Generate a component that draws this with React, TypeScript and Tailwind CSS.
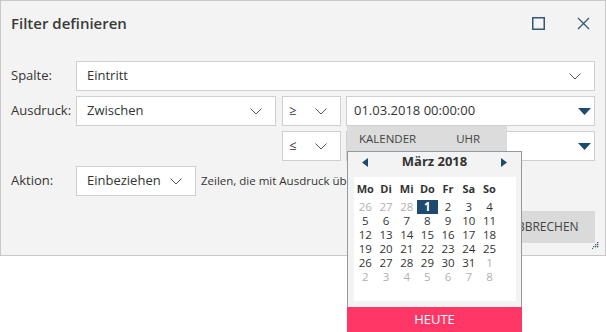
const font = { fontFamily: '"Open Sans", "Noto Sans", sans-serif' };

function Chevron() {
  return (
    <svg width="12" height="7" viewBox="0 0 12 7" className="shrink-0">
      <polyline points="0.5,0.5 6,6 11.5,0.5" fill="none" stroke="#555" strokeWidth="1" />
    </svg>
  );
}

function Caret() {
  return (
    <svg width="13" height="7" viewBox="0 0 13 7" className="shrink-0">
      <polygon points="0,0 13,0 6.5,7" fill="#1d4a6e" />
    </svg>
  );
}

const days: { d: number; muted?: boolean }[][] = [
  [{ d: 26, muted: true }, { d: 27, muted: true }, { d: 28, muted: true }, { d: 1 }, { d: 2 }, { d: 3 }, { d: 4 }],
  [{ d: 5 }, { d: 6 }, { d: 7 }, { d: 8 }, { d: 9 }, { d: 10 }, { d: 11 }],
  [{ d: 12 }, { d: 13 }, { d: 14 }, { d: 15 }, { d: 16 }, { d: 17 }, { d: 18 }],
  [{ d: 19 }, { d: 20 }, { d: 21 }, { d: 22 }, { d: 23 }, { d: 24 }, { d: 25 }],
  [{ d: 26 }, { d: 27 }, { d: 28 }, { d: 29 }, { d: 30 }, { d: 31 }, { d: 1, muted: true }],
  [{ d: 2, muted: true }, { d: 3, muted: true }, { d: 4, muted: true }, { d: 5, muted: true }, { d: 6, muted: true }, { d: 7, muted: true }, { d: 8, muted: true }],
];

function DatePopup() {
  return (
    <div className="absolute left-[347px] top-[126px] w-[175px]">
      <div className="flex h-[25px] w-[160px] items-center bg-[#dcdcdc] text-[11.5px] text-[#444]">
        <span className="pl-[12px]">KALENDER</span>
        <span className="pl-[40px]">UHR</span>
      </div>
      <div className="border-x border-t border-[#8f9aa5] bg-[#f3f3f3] pb-[6px]">
        <div className="flex h-[25px] items-center justify-between px-[14px] pb-[5px]">
          <svg width="6" height="9" viewBox="0 0 6 9"><polygon points="6,0 6,9 0,4.5" fill="#1d4a6e" /></svg>
          <span className="text-[13px] font-bold text-[#333]">März 2018</span>
          <svg width="6" height="9" viewBox="0 0 6 9"><polygon points="0,0 0,9 6,4.5" fill="#1d4a6e" /></svg>
        </div>
        <div className="ml-[6px] mr-[5px] bg-white pl-px pt-[4px] pb-[17px] text-[11.5px]">
          <div className="grid h-[14px] grid-cols-[repeat(7,20.7px)] items-center text-[11px] font-bold text-[#333]">
            {['Mo', 'Di', 'Mi', 'Do', 'Fr', 'Sa', 'So'].map((n) => (
              <span key={n} className="text-center leading-none">{n}</span>
            ))}
          </div>
          <div className="mt-[5px] flex flex-col">
            {days.map((row, i) => (
              <div key={i} className="grid h-[14px] grid-cols-[repeat(7,20.7px)]">
                {row.map((c, j) => {
                  const sel = i === 0 && c.d === 1;
                  return (
                    <span
                      key={j}
                      className={
                        'flex items-center justify-center leading-none ' +
                        (sel ? 'bg-[#1d4a6e] font-bold text-white' : c.muted ? 'text-[#b0b0b0]' : 'text-[#333]')
                      }
                    >
                      {c.d}
                    </span>
                  );
                })}
              </div>
            ))}
          </div>
        </div>
      </div>
      <div className="flex h-[26px] items-center justify-center bg-[#ff3767] text-[13px] text-white">HEUTE</div>
    </div>
  );
}

export default function App() {
  return (
    <div className="relative h-[332px] w-[606px] overflow-hidden bg-white text-[#333]" style={font}>
      <div className="relative flex h-[256px] flex-col border border-[#c8c8c8] bg-[#f3f3f3]">
        <div className="flex h-[44px] items-center pl-[10px] pr-[15px]">
          <h1 className="flex-1 text-[15px] font-semibold text-[#3a3a3a]">Filter definieren</h1>
          <svg width="13" height="13" viewBox="0 0 13 13" className="mr-[32px]">
            <rect x="0.75" y="0.75" width="11.5" height="11.5" fill="none" stroke="#34577a" strokeWidth="1.5" />
          </svg>
          <svg width="13" height="13" viewBox="0 0 13 13">
            <path d="M1 1 L12 12 M12 1 L1 12" stroke="#34577a" strokeWidth="1.3" />
          </svg>
        </div>

        <div className="flex flex-col gap-[5px] px-[10px] pt-[16px] text-[13px]">
          <div className="flex items-center">
            <span className="w-[65px]">Spalte:</span>
            <div className="flex h-[30px] flex-1 items-center justify-between border border-[#cfcfcf] bg-white pl-[10px] pr-[13px]">
              <span>Eintritt</span>
              <Chevron />
            </div>
          </div>

          <div className="flex items-center">
            <span className="w-[65px]">Ausdruck:</span>
            <div className="flex h-[30px] w-[200px] items-center justify-between border border-[#cfcfcf] bg-white pl-[10px] pr-[13px]">
              <span>Zwischen</span>
              <Chevron />
            </div>
            <div className="ml-[6px] flex h-[30px] w-[59px] items-center justify-between border border-[#cfcfcf] bg-white pl-[6px] pr-[13px]">
              <span>≥</span>
              <Chevron />
            </div>
            <div className="ml-[5px] flex h-[30px] flex-1 items-center justify-between border border-[#cfcfcf] bg-white pl-[7px] pr-[3px]">
              <span>01.03.2018 00:00:00</span>
              <Caret />
            </div>
          </div>

          <div className="flex items-center">
            <span className="w-[271px]" />
            <div className="flex h-[30px] w-[59px] items-center justify-between border border-[#cfcfcf] bg-white pl-[6px] pr-[13px]">
              <span>≤</span>
              <Chevron />
            </div>
            <div className="ml-[5px] flex h-[30px] flex-1 items-center justify-end border border-[#cfcfcf] bg-white pr-[3px]">
              <Caret />
            </div>
          </div>

          <div className="flex items-center">
            <span className="w-[65px]">Aktion:</span>
            <div className="flex h-[30px] w-[120px] items-center justify-between border border-[#cfcfcf] bg-white pl-[10px] pr-[13px]">
              <span>Einbeziehen</span>
              <Chevron />
            </div>
            <span className="ml-[5px] w-[146px] overflow-hidden whitespace-nowrap text-[11.5px]">
              Zeilen, die mit Ausdruck übereinstimmen
            </span>
          </div>

          <div className="mt-[10px] flex justify-end">
            <button className="h-[32px] w-[102px] bg-[#dadada] text-[12px] text-[#444]">ABBRECHEN</button>
          </div>
        </div>

        <svg width="7" height="7" viewBox="0 0 7 7" className="absolute bottom-[6px] right-[6px]">
          <g fill="#3a5a7a">
            <rect x="5" y="0" width="1.3" height="1.3" />
            <rect x="3" y="2" width="1.3" height="1.3" />
            <rect x="5" y="2" width="1.3" height="1.3" />
            <rect x="1" y="4" width="1.3" height="1.3" />
            <rect x="3" y="4" width="1.3" height="1.3" />
            <rect x="5" y="4" width="1.3" height="1.3" />
            <rect x="0" y="6" width="1" height="1" />
          </g>
        </svg>
      </div>
      <DatePopup />
    </div>
  );
}
